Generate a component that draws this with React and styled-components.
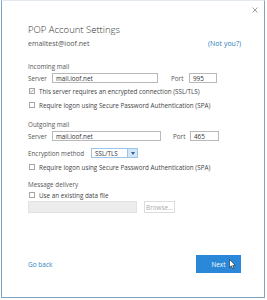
import React from 'react';
import styled, { createGlobalStyle } from 'styled-components';

const GlobalStyle = createGlobalStyle`
    html, body {
        margin: 0;
        padding: 0;
        background: #fff;
    }
    body {
        font-family: "Open Sans", "Noto Sans", sans-serif;
        color: #444;
    }
`

const Window = styled.div`
    width: 264px;
    height: 298px;
    margin-left: 1px;
    box-sizing: border-box;
    border: 1px solid #7ea2c2;
    border-top-color: #e3e9ee;
    background: #fff;
    display: flex;
    flex-direction: column;
    padding: 0 23px 0 26px;
`

const TopBar = styled.div`
    height: 18px;
    display: flex;
    justify-content: flex-end;
    align-items: center;
    margin-right: -17px;
`

const Close = styled.svg`
    width: 6px;
    height: 6px;
`

const Title = styled.div`
    margin-top: 5px;
    font-size: 9.5px;
    line-height: 12px;
    color: #333;
    font-weight: 300;
`

const Line = styled.div`
    display: flex;
    align-items: center;
    justify-content: space-between;
    height: ${p => p.$h || 8}px;
    margin-top: ${p => p.$mt || 0}px;
    font-size: ${p => p.$size || 6.3}px;
    white-space: nowrap;
`

const Link = styled.span`
    color: #2c7fbf;
    font-size: ${p => p.$size || 7}px;
`

const Label = styled.span`
    color: #555;
    width: ${p => p.$w ? `${p.$w}px` : 'auto'};
    flex: none;
`

const FieldRow = styled.div`
    display: flex;
    align-items: center;
    height: ${p => p.$h || 10}px;
    margin-top: ${p => p.$mt || 0}px;
    font-size: 6.3px;
    white-space: nowrap;
`

const Input = styled.div`
    box-sizing: border-box;
    width: ${p => p.$w}px;
    height: 100%;
    border: 1px solid #b9b9b9;
    background: ${p => p.$disabled ? '#ececec' : '#fff'};
    border-color: ${p => p.$disabled ? '#e2e2e2' : '#b9b9b9'};
    display: flex;
    align-items: center;
    padding-left: 3px;
    color: #333;
    flex: none;
`

const Spacer = styled.div`
    width: ${p => p.$w}px;
    flex: none;
`

const Select = styled.div`
    box-sizing: border-box;
    width: 47px;
    height: 100%;
    border: 1px solid #9dc3e6;
    display: flex;
    align-items: stretch;
    color: #333;
`

const SelectValue = styled.div`
    flex: 1;
    display: flex;
    align-items: center;
    padding-left: 3px;
`

const SelectArrow = styled.div`
    width: 9px;
    background: #d2e6f8;
    border-left: 1px solid #9dc3e6;
    display: flex;
    align-items: center;
    justify-content: center;
`

const CheckLine = styled.div`
    display: flex;
    align-items: center;
    gap: 4px;
    height: 8px;
    margin-top: ${p => p.$mt || 0}px;
    padding-left: 1px;
    font-size: 6.3px;
    white-space: nowrap;
    color: #444;
`

const Box = styled.div`
    box-sizing: border-box;
    width: 6px;
    height: 6px;
    border: 1px solid #a5a5a5;
    background: #fff;
    display: flex;
    align-items: center;
    justify-content: center;
    flex: none;
`

const Browse = styled.div`
    box-sizing: border-box;
    width: 31px;
    height: 100%;
    margin-left: 7px;
    border: 1px solid #dcdcdc;
    display: flex;
    align-items: center;
    justify-content: center;
    color: #aaa;
    font-size: 6.3px;
`

const Footer = styled.div`
    margin-top: auto;
    margin-bottom: 24px;
    display: flex;
    align-items: center;
    justify-content: space-between;
`

const NextButton = styled.div`
    position: relative;
    width: 45px;
    height: 18px;
    background: #2b88d8;
    color: #fff;
    font-size: 6.3px;
    display: flex;
    align-items: center;
    justify-content: center;
`

const Cursor = styled.svg`
    position: absolute;
    left: 33px;
    top: 4px;
    width: 7px;
    height: 11px;
`

const Checkbox = ({ checked, children, mt }) => (
    <CheckLine $mt={mt}>
        <Box>
            {checked && (
                <svg width="4" height="4" viewBox="0 0 4 4">
                    <path d="M0.4 2.1 L1.5 3.2 L3.6 0.6" stroke="#777" strokeWidth="0.7" fill="none" />
                </svg>
            )}
        </Box>
        {children}
    </CheckLine>
)

const App = () => (
    <>
        <GlobalStyle />
        <Window>
            <TopBar>
                <Close viewBox="0 0 6 6">
                    <path d="M0.5 0.5 L5.5 5.5 M5.5 0.5 L0.5 5.5" stroke="#888" strokeWidth="0.8" />
                </Close>
            </TopBar>
            <Title>POP Account Settings</Title>
            <Line $mt={3} $size={7}>
                <Label>emailtest@ioof.net</Label>
                <Link>(Not you?)</Link>
            </Line>

            <Line $mt={15}><Label>Incoming mail</Label></Line>
            <FieldRow $mt={3}>
                <Label $w={24}>Server</Label>
                <Input $w={106}>mail.ioof.net</Input>
                <Spacer $w={13} />
                <Label $w={18}>Port</Label>
                <Input $w={28}>995</Input>
            </FieldRow>
            <Checkbox checked mt={4}>This server requires an encrypted connection (SSL/TLS)</Checkbox>
            <Checkbox mt={6}>Require logon using Secure Password Authentication (SPA)</Checkbox>

            <Line $mt={11}><Label>Outgoing mail</Label></Line>
            <FieldRow $mt={3}>
                <Label $w={24}>Server</Label>
                <Input $w={109}>mail.ioof.net</Input>
                <Spacer $w={12} />
                <Label $w={17}>Port</Label>
                <Input $w={29}>465</Input>
            </FieldRow>
            <FieldRow $mt={7}>
                <Label $w={63}>Encryption method</Label>
                <Select>
                    <SelectValue>SSL/TLS</SelectValue>
                    <SelectArrow>
                        <svg width="4" height="3" viewBox="0 0 4 3">
                            <path d="M0 0 L4 0 L2 3 Z" fill="#2d5f8f" />
                        </svg>
                    </SelectArrow>
                </Select>
            </FieldRow>
            <Checkbox mt={5}>Require logon using Secure Password Authentication (SPA)</Checkbox>

            <Line $mt={9}><Label>Message delivery</Label></Line>
            <Checkbox mt={3}>Use an existing data file</Checkbox>
            <FieldRow $mt={2} $h={12}>
                <Input $w={109} $disabled />
                <Browse>Browse...</Browse>
            </FieldRow>

            <Footer>
                <Link $size={6.5}>Go back</Link>
                <NextButton>
                    Next
                    <Cursor viewBox="0 0 7 11">
                        <path d="M0.5 0.5 L0.5 8.5 L2.4 6.8 L3.8 9.8 L5 9.2 L3.7 6.4 L6.3 6.4 Z" fill="#fff" stroke="#222" strokeWidth="0.6" />
                    </Cursor>
                </NextButton>
            </Footer>
        </Window>
    </>
)

export default App;
